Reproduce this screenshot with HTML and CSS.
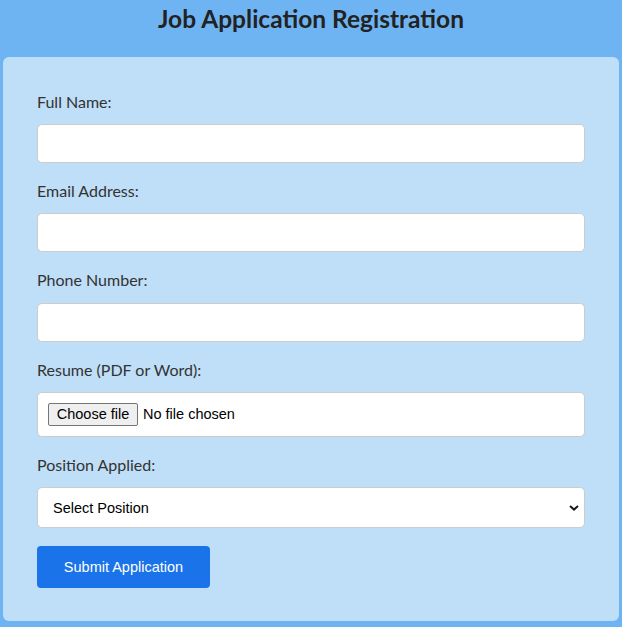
FILE: index.html
```html
<!DOCTYPE html>
<html lang="en">
<head>
<meta charset="utf-8">
<title>Job Application Registration</title>
<link rel="stylesheet" href="styles.css">
</head>
<body>
  <h1 class="title">Job Application Registration</h1>
  <form class="card">
    <div class="group">
      <label class="label" for="name">Full Name:</label>
      <input class="field" id="name" type="text">
    </div>
    <div class="group">
      <label class="label" for="email">Email Address:</label>
      <input class="field" id="email" type="email">
    </div>
    <div class="group">
      <label class="label" for="phone">Phone Number:</label>
      <input class="field" id="phone" type="tel">
    </div>
    <div class="group">
      <label class="label" for="resume">Resume (PDF or Word):</label>
      <div class="file-box">
        <span class="file-btn">Choose file</span>
        <span class="file-text">No file chosen</span>
      </div>
    </div>
    <div class="group">
      <label class="label" for="position">Position Applied:</label>
      <div class="select-wrap">
        <select class="field select" id="position">
          <option>Select Position</option>
        </select>
        <svg class="chevron" width="10" height="6" viewBox="0 0 10 6"><path d="M1 1 L5 4.6 L9 1" fill="none" stroke="#1a1a1a" stroke-width="2"/></svg>
      </div>
    </div>
    <button class="submit" type="button">Submit Application</button>
  </form>
</body>
</html>
```
FILE: styles.css
```css
html, body {
  margin: 0;
  padding: 0;
}
body {
  background: #6fb4f2;
  font-family: Lato, "Open Sans", sans-serif;
  height: 627px;
  overflow: hidden;
}
.title {
  margin: 0;
  padding-top: 4px;
  height: 57px;
  box-sizing: border-box;
  font-size: 24.5px;
  line-height: 1.2;
  font-weight: 700;
  text-align: center;
  color: #222;
}
.card {
  display: block;
  margin: 0 3px;
  padding: 35px 34px 33px;
  background: #bfdef7;
  border-radius: 6px;
}
.group {
  margin-bottom: 18px;
}
.label {
  display: block;
  font-size: 16px;
  line-height: 19.2px;
  color: #333;
  margin-bottom: 13px;
}
.field {
  display: block;
  width: 100%;
  height: 39px;
  box-sizing: border-box;
  margin: 0;
  background: #fff;
  border: 1px solid #ccc;
  border-radius: 5px;
  font-family: "Liberation Sans", Arial, sans-serif;
  font-size: 14.5px;
}
.file-box {
  display: flex;
  align-items: center;
  height: 45px;
  box-sizing: border-box;
  padding: 0 10px;
  background: #fff;
  border: 1px solid #ccc;
  border-radius: 5px;
  font-family: "Liberation Sans", Arial, sans-serif;
  font-size: 14.5px;
  color: #000;
}
.file-btn {
  display: flex;
  align-items: center;
  justify-content: center;
  width: 90px;
  height: 23px;
  box-sizing: border-box;
  background: #efefef;
  border: 1px solid #767676;
  border-radius: 2px;
  margin-right: 5px;
}
.select-wrap {
  position: relative;
}
.select {
  height: 41px;
  -webkit-appearance: none;
  appearance: none;
  padding: 0 15px;
  color: #000;
}
.chevron {
  position: absolute;
  right: 6px;
  top: 18px;
}
.submit {
  display: block;
  width: 173px;
  height: 42px;
  border: none;
  border-radius: 4px;
  background: #1a73e8;
  color: #fff;
  font-family: "Liberation Sans", Arial, sans-serif;
  font-size: 14.5px;
  padding: 0;
}
```
